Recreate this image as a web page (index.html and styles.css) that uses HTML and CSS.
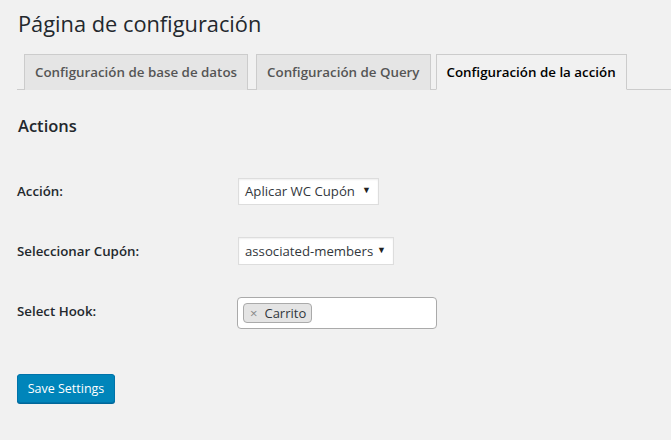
FILE: index.html
```html
<!DOCTYPE html>
<html lang="es">
<head>
<meta charset="utf-8">
<title>Página de configuración</title>
<link rel="stylesheet" href="styles.css">
</head>
<body>
<div class="wrap">
  <h1 class="page-title">Página de configuración</h1>
  <nav class="tabs">
    <a class="tab">Configuración de base de datos</a>
    <a class="tab">Configuración de Query</a>
    <a class="tab tab-active">Configuración de la acción</a>
  </nav>
  <h2 class="section-title">Actions</h2>
  <div class="form">
    <div class="row">
      <div class="label">Acción:</div>
      <div class="field">
        <div class="select select-1"><span>Aplicar WC Cupón</span><span class="arrow">▼</span></div>
      </div>
    </div>
    <div class="row">
      <div class="label">Seleccionar Cupón:</div>
      <div class="field">
        <div class="select select-2"><span>associated-members</span><span class="arrow">▼</span></div>
      </div>
    </div>
    <div class="row">
      <div class="label">Select Hook:</div>
      <div class="field">
        <div class="multi">
          <span class="tag"><span class="tag-x">×</span>Carrito</span>
        </div>
      </div>
    </div>
  </div>
  <button class="btn-primary">Save Settings</button>
</div>
</body>
</html>
```

FILE: styles.css
```css
html, body {
  margin: 0;
  padding: 0;
  background: #f1f1f1;
}
body {
  font-family: "Open Sans", "Noto Sans", sans-serif;
  color: #23282d;
  font-size: 13px;
  height: 440px;
  overflow: hidden;
}
.wrap {
  padding: 9px 0 0 17px;
  display: flex;
  flex-direction: column;
  align-items: flex-start;
}
.page-title {
  margin: 0 0 0 1px;
  font-size: 21.8px;
  font-weight: 400;
  line-height: 29px;
  color: #23282d;
}
.tabs {
  margin-top: 16px;
  align-self: stretch;
  display: flex;
  border-bottom: 1px solid #ccc;
  padding-left: 7px;
  height: 35px;
}
.tab {
  display: block;
  box-sizing: border-box;
  height: 36px;
  padding: 5px 10px;
  line-height: 24px;
  font-size: 13.35px;
  font-weight: 600;
  color: #555;
  background: #e5e5e5;
  border: 1px solid #ccc;
  border-bottom: none;
  margin-right: 8px;
  text-decoration: none;
}
.tab-active {
  background: #f1f1f1;
  color: #000;
  border-bottom: 1px solid #f1f1f1;
  margin-left: -3px;
}
.section-title {
  margin: 24px 0 0 1px;
  font-size: 16.5px;
  line-height: 24px;
  font-weight: 600;
  color: #23282d;
}
.form {
  margin-top: 23px;
  display: flex;
  flex-direction: column;
}
.row {
  height: 60px;
  display: flex;
  align-items: center;
}
.label {
  width: 221px;
  font-size: 13.3px;
  font-weight: 600;
  color: #23282d;
}
.field {
  display: flex;
  align-items: center;
}
.select {
  box-sizing: border-box;
  height: 27px;
  display: flex;
  align-items: center;
  justify-content: space-between;
  padding: 0 7px 0 6px;
  background: #fff;
  border: 1px solid #ddd;
  box-shadow: inset 0 1px 2px rgba(0,0,0,.07);
  font-size: 13.2px;
  color: #32373c;
}
.select-1 { width: 141px; }
.select-2 { width: 156px; height: 28px; }
.arrow {
  font-size: 9px;
  color: #222;
  margin-top: -3px;
}
.multi {
  box-sizing: border-box;
  width: 200px;
  height: 32px;
  margin-left: -1px;
  margin-top: 4px;
  background: #fff;
  border: 1px solid #aaa;
  border-radius: 4px;
  display: flex;
  align-items: center;
  padding-left: 5px;
}
.tag {
  box-sizing: border-box;
  height: 20px;
  display: flex;
  align-items: center;
  padding: 0 5px 0 6px;
  background: #e4e4e4;
  border: 1px solid #aaa;
  border-radius: 4px;
  font-size: 13px;
  color: #32373c;
}
.tag-x {
  color: #888;
  margin-right: 7px;
  font-size: 13px;
}
.btn-primary {
  margin-top: 33px;
  box-sizing: border-box;
  width: 98px;
  height: 29px;
  padding: 0;
  background: #0085ba;
  border: 1px solid #0073aa;
  border-radius: 3px;
  box-shadow: 0 1px 0 #006799;
  color: #fff;
  font-family: "Open Sans", "Noto Sans", sans-serif;
  font-size: 12.5px;
}
```
